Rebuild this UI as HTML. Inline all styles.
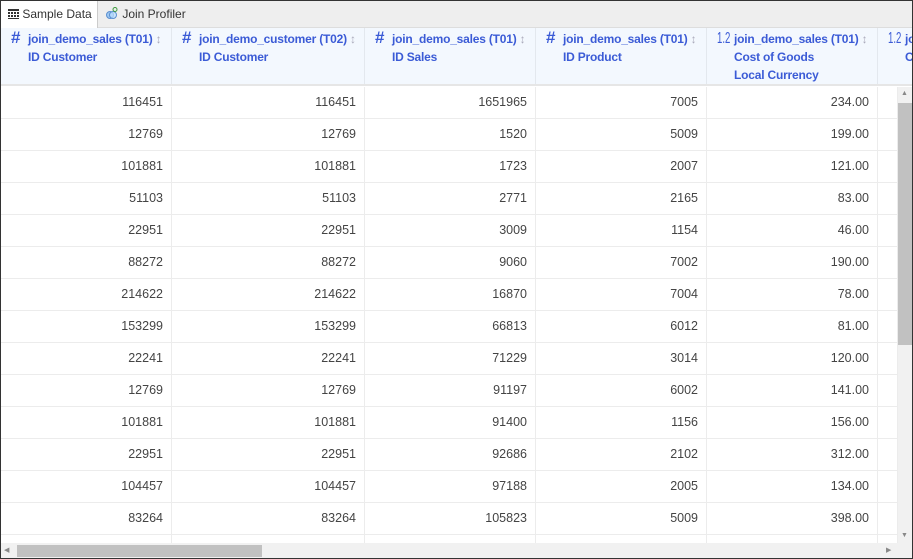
<!DOCTYPE html>
<html><head><style>
*{box-sizing:border-box;margin:0;padding:0}
html,body{width:913px;height:559px;overflow:hidden}
body{font-family:"Liberation Sans",Arial,sans-serif;background:#fff;position:relative}
.frame{position:absolute;left:0;top:0;width:913px;height:559px;border:1px solid #333}
.tabs{position:absolute;left:1px;top:1px;width:911px;height:27px;background:#eeeeee;border-bottom:1px solid #ddd}
.tab{position:absolute;top:0;height:27px;font-size:12px;color:#333;line-height:26px}
.t1{left:0;width:97px;background:#fff;border-right:1px solid #ccc;padding-left:7px;height:28px}
.t2{left:104px}
.hdr{position:absolute;left:1px;top:28px;width:911px;height:58px;background:#f3f8fe;border-bottom:2px solid #e6e6e6;overflow:hidden}
.hc{position:absolute;top:0;height:58px;border-right:1px solid #e3e8ee;color:#3b5bd6;font-weight:bold;font-size:12px;line-height:18px;padding-top:2px}
.hc .ic{position:absolute;left:10px;top:0;font-size:17px;line-height:20px}
.hc .ic2{position:absolute;left:10px;top:1px;font-size:16px;line-height:20px;font-weight:normal;transform:scaleX(.6);transform-origin:left}
.hc .tx{position:absolute;left:27px;top:2px;white-space:nowrap;letter-spacing:-.2px}
.hc .srt{color:#aab;font-weight:normal}
.rows{position:absolute;left:0;top:87px;width:898px;height:456px;overflow:hidden}
.row{position:absolute;left:1px;width:897px;height:32px;border-bottom:1px solid #ececec}
.c{position:absolute;top:0;height:31px;border-right:1px solid #ececec;text-align:right;padding-right:8px;font-size:12.5px;color:#444;line-height:31px}
.vs{position:absolute;left:898px;top:87px;width:14px;height:456px;background:#f1f1f1}
.vt{position:absolute;left:898px;top:103px;width:14px;height:242px;background:#c1c1c1}
.hs{position:absolute;left:1px;top:543px;width:911px;height:15px;background:#f1f1f1}
.ht{position:absolute;left:17px;top:545px;width:245px;height:12px;background:#c1c1c1}
.ar{position:absolute;font-size:7px;color:#888}
</style></head><body>
<div class="tabs">
<div class="tab t1"><svg width="11" height="10" style="vertical-align:-1px"><g fill="#333"><rect x="0" y="0" width="11" height="2"/><rect x="0" y="3" width="2" height="2"/><rect x="3" y="3" width="2" height="2"/><rect x="6" y="3" width="2" height="2"/><rect x="9" y="3" width="2" height="2"/><rect x="0" y="6" width="2" height="2"/><rect x="3" y="6" width="2" height="2"/><rect x="6" y="6" width="2" height="2"/><rect x="9" y="6" width="2" height="2"/><rect x="0" y="9" width="11" height="1"/></g></svg> Sample Data</div>
<div class="tab t2"><svg width="14" height="12" style="vertical-align:-1px"><circle cx="5" cy="8" r="3.5" fill="#9ec7f0" stroke="#5a8fd0"/><circle cx="8" cy="8" r="3.5" fill="#bde0ff" stroke="#5a8fd0" fill-opacity=".7"/><circle cx="10" cy="2.5" r="2" fill="none" stroke="#3c9a3c"/></svg> Join Profiler</div>
</div>
<div class="hdr">
<div class="hc" style="left:0;width:171px"><span class="ic">#</span><div class="tx">join_demo_sales (T01) <span class="srt">↕</span><br>ID Customer</div></div>
<div class="hc" style="left:171px;width:193px"><span class="ic">#</span><div class="tx">join_demo_customer (T02) <span class="srt">↕</span><br>ID Customer</div></div>
<div class="hc" style="left:364px;width:171px"><span class="ic">#</span><div class="tx">join_demo_sales (T01) <span class="srt">↕</span><br>ID Sales</div></div>
<div class="hc" style="left:535px;width:171px"><span class="ic">#</span><div class="tx">join_demo_sales (T01) <span class="srt">↕</span><br>ID Product</div></div>
<div class="hc" style="left:706px;width:171px"><span class="ic2">1.2</span><div class="tx">join_demo_sales (T01) <span class="srt">↕</span><br>Cost of Goods<br>Local Currency</div></div>
<div class="hc" style="left:877px;width:40px;border:none"><span class="ic2">1.2</span><div class="tx">jo<br>C</div></div>
</div>
<div class="rows" id="rows"></div>
<script>
var d=[[116451,1651965,7005,"234.00"],[12769,1520,5009,"199.00"],[101881,1723,2007,"121.00"],[51103,2771,2165,"83.00"],[22951,3009,1154,"46.00"],[88272,9060,7002,"190.00"],[214622,16870,7004,"78.00"],[153299,66813,6012,"81.00"],[22241,71229,3014,"120.00"],[12769,91197,6002,"141.00"],[101881,91400,1156,"156.00"],[22951,92686,2102,"312.00"],[104457,97188,2005,"134.00"],[83264,105823,5009,"398.00"],["","","",""]];
var L=[[0,171],[171,193],[364,171],[535,171],[706,171],[877,20]];
var h="";
d.forEach(function(r,i){var v=[r[0],r[0],r[1],r[2],r[3],""];h+='<div class="row" style="top:'+(i*32)+'px">';
v.forEach(function(x,j){h+='<div class="c" style="left:'+L[j][0]+'px;width:'+L[j][1]+'px">'+x+'</div>'});h+='</div>'});
document.getElementById('rows').innerHTML=h;
</script>
<div class="vs"></div><div class="vt"></div>
<div class="ar" style="left:901px;top:90px">▲</div>
<div class="ar" style="left:901px;top:532px">▼</div>
<div class="hs"></div><div class="ht"></div>
<div class="ar" style="left:4px;top:546px">◀</div>
<div class="ar" style="left:886px;top:546px">▶</div>
<div class="frame"></div>
</body></html>
